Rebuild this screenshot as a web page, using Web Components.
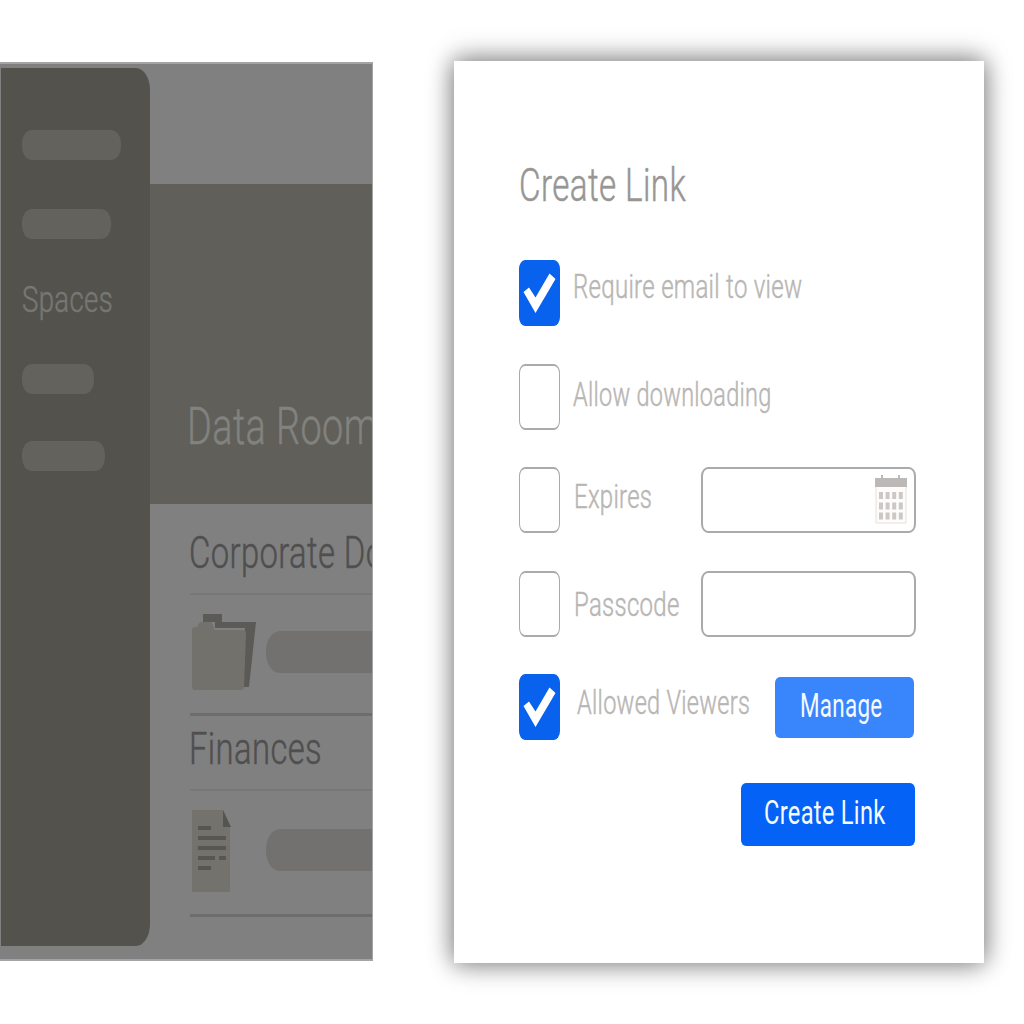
<!DOCTYPE html>
<html lang="en">
<head>
<meta charset="utf-8">
<title>Create Link</title>
<style>
  html, body { margin: 0; background: #fff; }
  body { width: 1024px; height: 1024px; overflow: hidden; font-family: Roboto, "Liberation Sans", Arial, sans-serif; font-weight: 300; }
</style>
</head>
<body>
<share-screen></share-screen>
<script>
const define = (name, html, ready) => {
  const t = document.createElement('template');
  t.innerHTML = html;
  customElements.define(name, class extends HTMLElement {
    constructor() {
      super();
      this.attachShadow({ mode: 'open' }).appendChild(t.content.cloneNode(true));
    }
    connectedCallback() { if (ready) ready(this, this.shadowRoot); }
  });
};

// Condensed text: squeezes its line to the given width.
define('narrow-text', `
  <style>
    :host { display: block; flex: none; white-space: nowrap; }
    span { display: inline-block; transform-origin: 0 50%; line-height: inherit; letter-spacing: .012em; -webkit-text-stroke: var(--stroke, .5px) currentColor; }
  </style><span></span>`, (el, root) => {
  const s = root.querySelector('span');
  const size = +el.getAttribute('size'), w = +el.getAttribute('width');
  s.textContent = el.getAttribute('text');
  el.style.fontSize = el.style.lineHeight = el.style.height = size + 'px';
  el.style.width = w + 'px';
  s.style.transform = 'scaleX(' + w / (s.offsetWidth - size * .012) + ')';
});

define('skeleton-bar', `
  <style>
    :host { display: block; flex: none; height: 30px; border-radius: 10px / 13px; background: #63625d; }
  </style>`);

define('side-bar', `
  <style>
    :host { display: flex; flex-direction: column; box-sizing: border-box; width: 149px; height: 878px; padding: 62px 0 0 21px;
      margin: 4px 0 0 1px; background: #53524d; border-radius: 0 14px 14px 0 / 0 22px 22px 0; color: #787773; }
    .a { width: 99px; } .b { width: 89px; margin-top: 49px; }
    narrow-text { margin: 43px 0 46px; }
    .c { width: 72px; } .d { width: 83px; margin-top: 47px; }
  </style>
  <skeleton-bar class="a"></skeleton-bar>
  <skeleton-bar class="b"></skeleton-bar>
  <narrow-text text="Spaces" size="36" width="91"></narrow-text>
  <skeleton-bar class="c"></skeleton-bar>
  <skeleton-bar class="d"></skeleton-bar>`);

define('folder-icon', `
  <style>:host, svg { display: block; flex: none; }</style>
  <svg width="68" height="78" viewBox="0 0 68 78">
    <path d="M13 0h19v8h34l-7 65h-8l4-59H25V8H13z" fill="#5b5a57"/>
    <path d="M2 16q0-3 3-3h2q2-5 5-5h8q3 0 4 7l1 1h28q3 0 3 4l-2 53q0 3-3 3H5q-3 0-3-4z" fill="#72716c"/>
  </svg>`);

define('document-icon', `
  <style>:host, svg { display: block; flex: none; }</style>
  <svg width="68" height="82" viewBox="0 0 68 82">
    <path d="M2 0h31l7 17v65H2z" fill="#73726d"/>
    <path d="M33 0l8 17h-8z" fill="#555450"/>
    <path d="M8 18h13M8 28h28M8 38h28M8 48h17M29 48h7M8 58h13" stroke="#575652" stroke-width="4"/>
  </svg>`);

define('file-group', `
  <style>
    :host { display: block; color: #4f4f4f; }
    narrow-text { margin-left: -1px; }
    .row { display: flex; box-sizing: border-box; height: var(--row, 123px); width: 183px; margin-top: 18px;
      border-top: 2px solid #777; border-bottom: 3px solid #6d6d6d; padding-top: 19px; }
    skeleton-bar { width: 150px; height: 42px; margin: var(--drop, 17px) 0 0 8px; border-radius: 14px / 20px; background: #72716f; }
  </style>
  <narrow-text></narrow-text>
  <div class="row"><slot></slot><skeleton-bar></skeleton-bar></div>`, (el, root) => {
  const old = root.querySelector('narrow-text');
  const t = document.createElement('narrow-text');
  for (const a of ['text', 'size', 'width']) t.setAttribute(a, el.getAttribute(a));
  old.replaceWith(t);
});

define('room-panel', `
  <style>
    :host { display: flex; box-sizing: border-box; width: 373px; height: 899px; overflow: hidden; background: #808080;
      border: solid #a4a4a4; border-width: 2px 1px 2px 0; }
    side-bar { flex: none; }
    main { flex: none; width: 222px; overflow: hidden; padding-top: 120px; }
    header { box-sizing: border-box; height: 320px; padding: 217px 0 0 37px; background: #605f5a; color: #82827f; }
    .list { padding: 26px 0 0 40px; }
    .second { margin-top: 10px; --row: 128px; --drop: 19px; }
  </style>
  <side-bar></side-bar>
  <main>
    <header><narrow-text text="Data Room" size="52" width="190"></narrow-text></header>
    <div class="list">
      <file-group text="Corporate Do" size="45" width="195"><folder-icon></folder-icon></file-group>
      <file-group class="second" text="Finances" size="45" width="133"><document-icon></document-icon></file-group>
    </div>
  </main>`);

define('check-box', `
  <style>
    :host { display: block; flex: none; box-sizing: border-box; width: 41px; height: 66px; border: 2px solid #aaa;
      border-left-width: 1.5px; border-right-width: 1.5px; border-radius: 6px / 9px; background: #fff; }
    :host([checked]) { border: 0; background: #0862ee; }
    svg { display: none; }
    :host([checked]) svg { display: block; }
  </style>
  <svg width="41" height="66" viewBox="0 0 41 66"><path d="M4.500 32l5.500-4.500 6.500 10L30.500 13.500l6 5.500L16.500 53z" fill="#fff"/></svg>`);

define('text-field', `
  <style>
    :host { display: flex; justify-content: flex-end; flex: none; box-sizing: border-box; width: 215px; height: 66px;
      border: 2px solid #aaa; border-radius: 7px / 9px; padding: 6px 7px 0 0; }
  </style><slot></slot>`);

define('calendar-icon', `
  <style>:host, svg { display: block; }</style>
  <svg width="32" height="51" viewBox="0 0 32 51">
    <path d="M1 4h30v44H1z" fill="#fdfcfb" stroke="#e6dfdb"/>
    <path d="M0 3h6V0h2v3h15V0h2v3h7v9H0z" fill="#bbb8b5"/>
    <path d="M4 20.500h24M4 31h24M4 41h24" stroke="#cbc8c5" stroke-width="7" stroke-dasharray="4 2.600"/>
  </svg>`);

define('solid-button', `
  <style>
    :host { display: flex; justify-content: flex-start; flex: none; box-sizing: border-box; border-radius: 5px / 6px; color: #f4faff; font-weight: 400; --stroke: 0; }
  </style><slot></slot>`);

define('option-row', `
  <style>
    :host { display: flex; align-items: flex-start; height: 66px; color: #b8b6b4; }
  </style><slot></slot>`);

define('link-dialog', `
  <style>
    :host { display: flex; flex-direction: column; box-sizing: border-box; width: 530px; height: 902px; padding: 101px 68px 0 64.500px;
      background: #fff; box-shadow: 0 0 20px rgba(0,0,0,.24), 0 -5px 26px rgba(0,0,0,.25), 0 5px 26px rgba(0,0,0,.2); color: #989694; }
    narrow-text { position: relative; }
    .options { display: flex; flex-direction: column; gap: 37.600px; margin-top: 52px; }
    text-field, .manage { margin-left: auto; }
    .manage { width: 139px; height: 61px; margin: 3px 2px 0 auto; padding: 12px 0 0 25px; background: #3985fc; }
    .create { width: 174px; height: 63px; margin: 43px 1px 0 auto; padding: 13px 0 0 23px; background: #0562f7; }
  </style>
  <narrow-text text="Create Link" size="46" width="167"></narrow-text>
  <div class="options">
    <option-row><check-box checked></check-box><narrow-text style="margin:10px 0 0 13px" text="Require email to view" size="33" width="229"></narrow-text></option-row>
    <option-row><check-box></check-box><narrow-text style="margin:14px 0 0 13px" text="Allow downloading" size="33" width="198"></narrow-text></option-row>
    <option-row><check-box></check-box><narrow-text style="margin:13px 0 0 14px" text="Expires" size="33" width="78"></narrow-text><text-field><calendar-icon></calendar-icon></text-field></option-row>
    <option-row><check-box></check-box><narrow-text style="margin:17px 0 0 14px" text="Passcode" size="33" width="105"></narrow-text><text-field></text-field></option-row>
    <option-row><check-box checked></check-box><narrow-text style="margin:12px 0 0 17px" text="Allowed Viewers" size="33" width="173"></narrow-text><solid-button class="manage"><narrow-text text="Manage" size="33" width="82"></narrow-text></solid-button></option-row>
  </div>
  <solid-button class="create"><narrow-text text="Create Link" size="33" width="121"></narrow-text></solid-button>`);

define('share-screen', `
  <style>
    :host { display: flex; justify-content: space-between; align-items: flex-start; box-sizing: border-box; width: 1024px; height: 1024px; padding: 61px 40px 0 0; }
    room-panel { margin-top: 1px; }
  </style>
  <room-panel></room-panel>
  <link-dialog></link-dialog>`);
</script>
</body>
</html>
